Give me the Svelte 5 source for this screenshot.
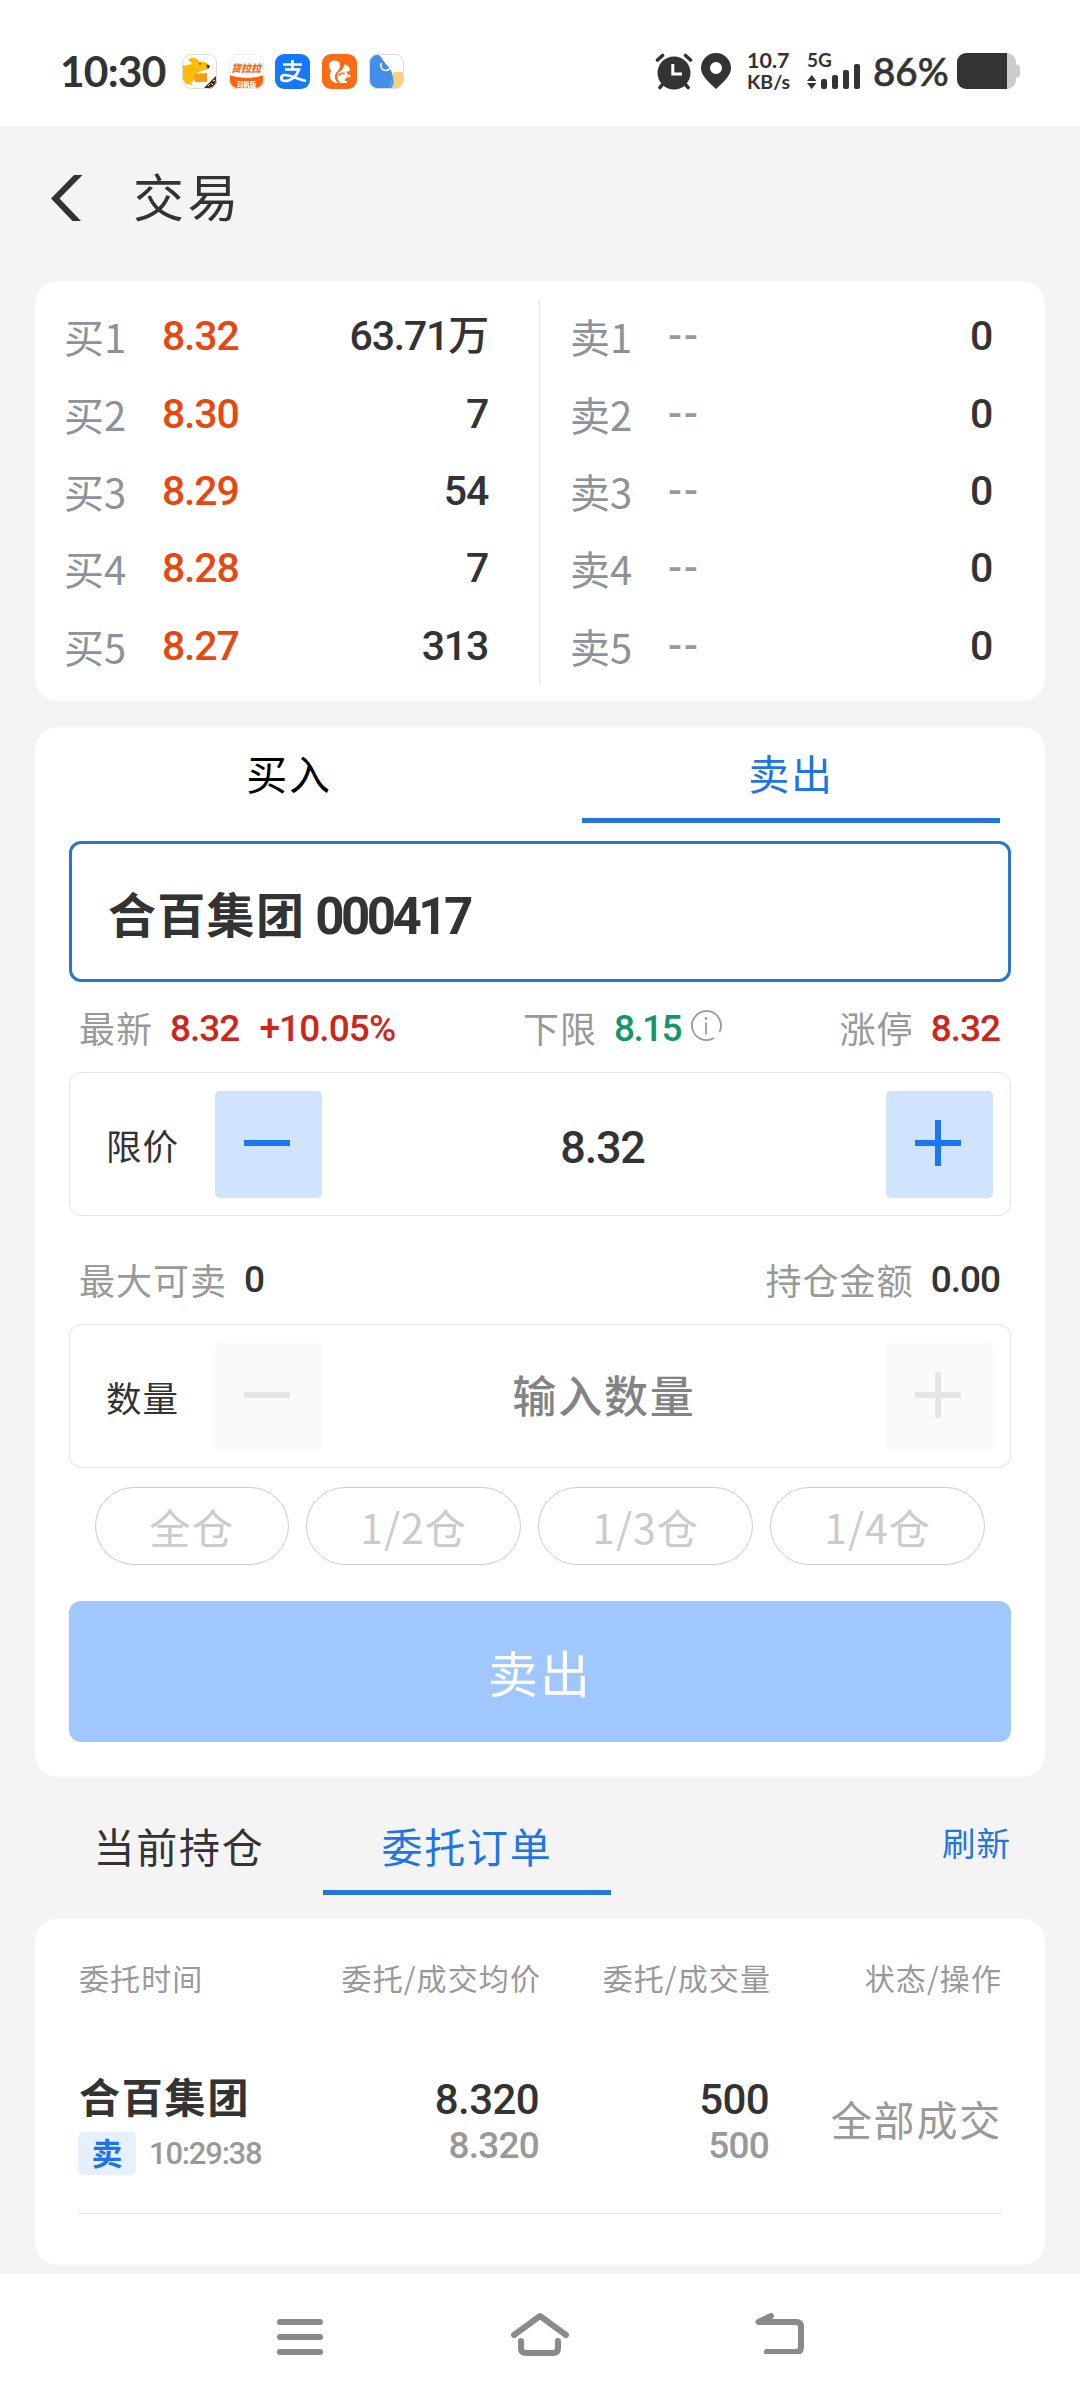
<script lang="ts">
  type Level = { label: string; price: string; volume: string };

  const bids: Level[] = [
    { label: '买1', price: '8.32', volume: '63.71万' },
    { label: '买2', price: '8.30', volume: '7' },
    { label: '买3', price: '8.29', volume: '54' },
    { label: '买4', price: '8.28', volume: '7' },
    { label: '买5', price: '8.27', volume: '313' }
  ];

  const asks: Level[] = [1, 2, 3, 4, 5].map((n) => ({ label: `卖${n}`, price: '--', volume: '0' }));

  const portions = ['全仓', '1/2仓', '1/3仓', '1/4仓'];

  const orders = [
    {
      name: '合百集团',
      side: '卖',
      time: '10:29:38',
      price: '8.320',
      avgPrice: '8.320',
      qty: '500',
      filled: '500',
      status: '全部成交'
    }
  ];

  let side = $state('sell');
  let listTab = $state('orders');
</script>

{#snippet plusMinus(plus: boolean)}
  <svg width="46" height="46" viewBox="0 0 46 46">
    <rect y="20" width="46" height="6" fill="currentColor" />
    {#if plus}<rect x="20" width="6" height="46" fill="currentColor" />{/if}
  </svg>
{/snippet}

<div class="screen">
  <div class="status-bar">
    <span class="clock">10:30</span>
    <div class="app-icons">
      <svg width="35" height="35" viewBox="0 0 35 35">
        <clipPath id="tile"><rect width="35" height="35" rx="9" /></clipPath>
        <g clip-path="url(#tile)">
          <rect width="35" height="35" fill="#fff" />
          <path d="M0 11C4 12 7 11 10 9L6 6C9 3 13 3 16 6L18 8C22 7 26 9 28 12L26 15C23 16 20 17 17 18L14 20L12 26L9 29L11 31L4 30L0 24Z" fill="#fbbd08" />
          <path d="M12 20L25 19V28H13Z" fill="#f79a14" />
          <path d="M24 10.5L28 12L26 15Z" fill="#222" />
          <circle cx="18" cy="9.8" r=".9" fill="#333" />
          <path d="M21 35L35 21V35Z" fill="#47220f" />
          <path d="M26 32L28 30M29 29L31 31M31 27L33 26" stroke="#fff" stroke-width="1" />
        </g>
        <rect x=".5" y=".5" width="34" height="34" rx="8.5" fill="none" stroke="#ddd" />
      </svg>
      <svg width="35" height="35" viewBox="0 0 35 35">
        <g clip-path="url(#tile)">
          <rect width="35" height="35" fill="#fff" />
          <path d="M0 21Q17 27 35 21V35H0Z" fill="#fa6210" />
        </g>
        <rect x=".5" y=".5" width="34" height="34" rx="8.5" fill="none" stroke="#eee" />
        <text class="tile-name" x="17" y="17.5" fill="#fa6210">货拉拉</text>
        <text class="tile-tag" x="17.5" y="33" fill="#fff">司机版</text>
      </svg>
      <svg width="35" height="35" viewBox="0 0 35 35">
        <rect width="35" height="35" rx="9" fill="#1677ff" />
        <path d="M8 10.5H27M17.5 6V15M10 15.5H24C22 22 16 27 10 27C5 27 5 21 10 21C16 21 22 25 31 27" fill="none" stroke="#fff" stroke-width="2.7" />
      </svg>
      <svg width="35" height="35" viewBox="0 0 35 35">
        <rect width="35" height="35" rx="9" fill="#fb6a15" />
        <path d="M17.5 9C15 5 7 6 7 12C7 14 8 16 9.5 17C5 22 10 30 16 29C12 25 12 21 15 18C17 16 19 13 17.5 9Z" fill="#fff" />
        <path d="M23 10L26 12C28 14 29 16 27 17L24 18C27 20 26 24 23 25V27H25V29H18C14 24 15 18 20 16C21 14 22 12 23 10Z" fill="#fff" />
        <path d="M17 22A4 4 0 0 1 23 20" fill="none" stroke="#fb6a15" stroke-width="1.5" />
        <circle cx="27" cy="22" r="1.5" fill="#fff" />
      </svg>
      <svg width="35" height="35" viewBox="0 0 35 35">
        <g clip-path="url(#tile)">
          <rect width="35" height="35" fill="#fff" />
          <circle cx="29" cy="27" r="9.5" fill="#f9d084" />
          <path d="M0 0H8C13 2 14 8 19 12C25 18 24 27 20 35H0Z" fill="#438ee8" />
          <path d="M20 35C23 30 24 24 22 18C25 24 26 30 22 35Z" fill="#31a8dc" />
        </g>
        <path d="M12 9C10 18 22 20 23 9" fill="none" stroke="#fff" stroke-width="1.6" />
        <rect x=".5" y=".5" width="34" height="34" rx="8.5" fill="none" stroke="#ddd" />
      </svg>
    </div>

    <div class="indicators">
      <svg width="38" height="37" viewBox="0 0 38 37">
        <circle cx="19" cy="20" r="16.5" fill="#333" />
        <path d="M2.5 7L7.5 2.5M30.5 2.5L35.5 7M7 32L5 34.5M31 32L33 34.5" stroke="#333" stroke-width="3.6" stroke-linecap="round" />
        <path d="M17.8 11V21H27" fill="none" stroke="#fff" stroke-width="3" />
      </svg>
      <svg class="pin" width="30" height="36" viewBox="0 0 30 36">
        <path fill-rule="evenodd" d="M15 0A15 15 0 0 0 0 15C0 23 8 29 15 36C22 29 30 23 30 15A15 15 0 0 0 15 0ZM15 9A6 6 0 1 1 15 21A6 6 0 1 1 15 9Z" fill="#333" />
      </svg>
      <div class="speed"><span>10.7</span><span>KB/s</span></div>
      <div class="signal">
        <span>5G</span>
        <svg width="54" height="26" viewBox="0 0 54 26">
          <path d="M0 18L4.7 12L9.4 18ZM0 20H9.4L4.7 26Z" fill="#333" />
          <rect x="14" y="16" width="6" height="10" rx="2" fill="#333" />
          <rect x="25" y="12" width="6" height="14" rx="2" fill="#333" />
          <rect x="36" y="7" width="6" height="19" rx="2" fill="#333" />
          <rect x="47" y="1" width="6" height="25" rx="2" fill="#333" />
        </svg>
      </div>
      <span class="percent">86%</span>
      <svg width="63" height="36" viewBox="0 0 63 36">
        <path d="M9 0H50A9 9 0 0 1 59 9V11.5H60Q63 11.5 63 15V21Q63 24.5 60 24.5H59V27A9 9 0 0 1 50 36H9Z" fill="#ccc" />
        <path d="M9 0H50V36H9A9 9 0 0 1 0 27V9A9 9 0 0 1 9 0Z" fill="#333" />
      </svg>
    </div>
  </div>

  <header class="title-bar">
    <svg width="32" height="46" viewBox="0 0 32 46">
      <path d="M23 0H31.5L8.5 23.5L30 46H21.5L0 23.5Z" fill="#333" />
    </svg>
    <h1>交易</h1>
  </header>

  <section class="card book">
    {#each [bids, asks] as levels, i}
      <div class="book-side" class:asks={i === 1}>
        {#each levels as level}
          <div class="level">
            <span class="level-label">{level.label}</span>
            <span class="level-price" class:empty={level.price === '--'}>{level.price}</span>
            <span class="level-volume">{level.volume}</span>
          </div>
        {/each}
      </div>
    {/each}
  </section>

  <section class="card trade">
    <nav class="side-tabs">
      <button class:active={side === 'buy'} onclick={() => (side = 'buy')}>买入</button>
      <button class:active={side === 'sell'} onclick={() => (side = 'sell')}>卖出</button>
    </nav>

    <div class="stock"><span>合百集团</span><span class="code">000417</span></div>

    <div class="info quotes">
      <div class="latest"><span class="key">最新</span><b class="up">8.32</b><b class="up change">+10.05%</b></div>
      <div class="lower">
        <span class="key">下限</span><b class="down">8.15</b>
        <svg width="32" height="32" viewBox="0 0 32 32">
          <path d="M29.5 22A14.5 14.5 0 1 0 24 28" fill="none" stroke="#999" stroke-width="1.8" />
          <path d="M16 12.5V24.5" stroke="#999" stroke-width="1.8" />
          <circle cx="16" cy="8.5" r="1.4" fill="#999" />
        </svg>
      </div>
      <div class="upper"><span class="key">涨停</span><b class="up">8.32</b></div>
    </div>

    <div class="stepper">
      <span class="stepper-label">限价</span>
      <button>{@render plusMinus(false)}</button>
      <span class="value">8.32</span>
      <button>{@render plusMinus(true)}</button>
    </div>

    <div class="info holdings">
      <div><span class="key">最大可卖</span><b>0</b></div>
      <div class="upper"><span class="key">持仓金额</span><b>0.00</b></div>
    </div>

    <div class="stepper">
      <span class="stepper-label">数量</span>
      <button disabled>{@render plusMinus(false)}</button>
      <span class="placeholder">输入数量</span>
      <button disabled>{@render plusMinus(true)}</button>
    </div>

    <div class="portions">
      {#each portions as portion, i}
        <button class:full={i === 0}>{portion}</button>
      {/each}
    </div>

    <button class="submit">卖出</button>
  </section>

  <nav class="list-tabs">
    <button class:active={listTab === 'positions'} onclick={() => (listTab = 'positions')}>当前持仓</button>
    <button class:active={listTab === 'orders'} onclick={() => (listTab = 'orders')}>委托订单</button>
    <button class="refresh">刷新</button>
  </nav>

  <section class="card orders">
    <div class="order-grid order-head">
      <span>委托时间</span>
      <span>委托/成交均价</span>
      <span>委托/成交量</span>
      <span>状态/操作</span>
    </div>
    {#each orders as order}
      <div class="order-grid order">
        <div class="who">
          <strong>{order.name}</strong>
          <div class="meta"><i>{order.side}</i><time>{order.time}</time></div>
        </div>
        <div class="pair"><b>{order.price}</b><span>{order.avgPrice}</span></div>
        <div class="pair"><b>{order.qty}</b><span>{order.filled}</span></div>
        <div class="state">{order.status}</div>
      </div>
    {/each}
  </section>

  <footer class="nav-bar">
    <svg width="46" height="36" viewBox="0 0 46 36">
      <path d="M3 3H43M3 18H43M3 33H43" />
    </svg>
    <svg width="60" height="46" viewBox="0 0 60 46">
      <path d="M4 25L30 6L56 25M11 31V38Q11 43 16 43H43Q48 43 48 38V31" />
    </svg>
    <svg width="50" height="42" viewBox="0 0 50 42">
      <path d="M16 4L3.5 10H41Q46 10 46 15V35Q46 40 41 40H12" />
    </svg>
  </footer>
</div>

<style>
  :global(body) {
    background: #f4f4f4;
  }

  .screen {
    width: 1080px;
    height: 2400px;
    display: flex;
    flex-direction: column;
    background: #f4f4f4;
    color: #333;
    font-family: 'Noto Sans CJK SC', sans-serif;
    overflow: hidden;
    white-space: nowrap;
  }

  svg {
    display: block;
    flex: none;
  }

  button {
    margin: 0;
    padding: 0;
    border: 0;
    background: none;
    color: inherit;
    font: inherit;
  }

  /* system status bar */
  .status-bar {
    box-sizing: border-box;
    flex: none;
    height: 126px;
    padding: 16px 60px 0 60px;
    display: flex;
    align-items: center;
    background: #fff;
  }

  .clock {
    width: 122px;
    font: 700 42.5px/50px Lato, sans-serif;
    letter-spacing: -0.8px;
  }

  .app-icons {
    display: flex;
    gap: 11.7px;
  }

  .tile-name {
    font-size: 10px;
    font-weight: 900;
    font-style: italic;
    text-anchor: middle;
  }

  .tile-tag {
    font-size: 6.5px;
    font-weight: 900;
    text-anchor: middle;
  }

  .indicators {
    margin-left: auto;
    display: flex;
    align-items: center;
  }

  .pin {
    margin-left: 8px;
  }

  .speed {
    width: 44px;
    margin-left: 16px;
    display: flex;
    flex-direction: column;
    font: 700 21.5px/22px Lato, sans-serif;
  }

  .speed span + span {
    font-size: 19.5px;
  }

  .signal {
    margin-left: 16px;
    font: 700 19px/14px Lato, sans-serif;
  }

  .signal svg {
    margin-top: -4px;
  }

  .percent {
    width: 84px;
    margin-left: 12px;
    font: 500 38.5px/44px Lato, sans-serif;
    -webkit-text-stroke: 0.6px #333;
  }

  .title-bar {
    flex: none;
    height: 155px;
    padding-left: 51px;
    padding-bottom: 11px;
    box-sizing: border-box;
    display: flex;
    align-items: center;
    gap: 50px;
  }

  h1 {
    margin: 0;
    padding-bottom: 6px;
    font-size: 51px;
    font-weight: 400;
    line-height: 60px;
    letter-spacing: 3.5px;
  }

  .card {
    box-sizing: border-box;
    flex: none;
    margin: 0 35px;
    border-radius: 23px;
    background: #fff;
  }

  /* order book */
  .book {
    height: 420px;
    padding: 17px 0 16px;
    display: grid;
    grid-template-columns: 505px 505px;
  }

  .book-side {
    box-sizing: border-box;
    padding: 0 51px 0 29px;
    display: grid;
    grid-template-rows: repeat(5, 1fr);
    border-right: 1px solid #e8e8e8;
  }

  .book-side.asks {
    padding: 0 53px 0 30px;
    border-right: 0;
  }

  .level {
    display: flex;
    align-items: center;
  }

  .level-label {
    width: 98px;
    padding-bottom: 1px;
    color: #8b9399;
    font-size: 40px;
    line-height: 50px;
  }

  .level-price,
  .level-volume {
    padding-bottom: 1px;
    font: 500 41px/50px Roboto, 'Noto Sans CJK SC', sans-serif;
    letter-spacing: -1.2px;
  }

  .level-price {
    color: #e8470f;
  }

  .level-price.empty {
    color: #999;
    letter-spacing: 2px;
  }

  .level-volume {
    margin-left: auto;
  }

  /* trade form */
  .trade {
    height: 1050px;
    margin-top: 26px;
    padding: 0 34px;
    display: flex;
    flex-direction: column;
  }

  .side-tabs {
    height: 96px;
    margin: 0 -34px;
    display: grid;
    grid-template-columns: 1fr 1fr;
  }

  .side-tabs button {
    box-sizing: border-box;
    margin: 0 45px 0 42px;
    padding-bottom: 1px;
    border-bottom: 5px solid transparent;
    color: #000;
    font-size: 41px;
    line-height: 50px;
    letter-spacing: 1.8px;
  }

  .side-tabs button:first-child {
    margin: 0 42px 0 45px;
  }

  .side-tabs .active {
    border-color: #2576dc;
    color: #1f74e6;
  }

  .stock {
    box-sizing: border-box;
    height: 141px;
    margin-top: 18px;
    padding-left: 36px;
    display: flex;
    align-items: center;
    border: 3px solid #2b74d4;
    border-radius: 12px;
    font-size: 48px;
    font-weight: 700;
    line-height: 60px;
    letter-spacing: 1.3px;
  }

  .code {
    margin-left: 10px;
    padding-top: 11px;
    font-family: Roboto, sans-serif;
    font-size: 51px;
    letter-spacing: -3.5px;
  }

  .info {
    display: flex;
    justify-content: space-between;
    padding: 0 11px 0 10px;
  }

  .info div {
    display: flex;
    align-items: center;
  }

  .quotes {
    height: 90px;
  }

  .info .latest {
    flex: none;
    width: 444px;
  }

  .info .upper {
    margin-left: auto;
  }

  .holdings {
    height: 108px;
    padding-top: 17px;
    box-sizing: border-box;
  }

  .key {
    margin-right: 17px;
    color: #999;
    font-size: 36px;
    line-height: 44px;
    letter-spacing: 1px;
  }

  .info b {
    padding-top: 3px;
    font: 500 37px/44px Roboto, sans-serif;
    letter-spacing: -1px;
  }

  .info .up {
    color: #cc261d;
  }

  .info .down {
    color: #14976a;
    letter-spacing: -1.6px;
  }

  .info .change {
    margin-left: 20px;
    letter-spacing: -0.9px;
  }

  .lower svg {
    margin-left: 9px;
    margin-bottom: 3px;
  }

  .stepper {
    box-sizing: border-box;
    height: 144px;
    padding: 0 17px 0 36px;
    display: flex;
    align-items: center;
    border: 1px solid #e4e4e4;
    border-radius: 12px;
  }

  .stepper-label {
    width: 109px;
    font-size: 35.5px;
    letter-spacing: 1px;
  }

  .stepper button {
    width: 107px;
    height: 107px;
    padding-right: 3px;
    padding-bottom: 3px;
    box-sizing: border-box;
    display: flex;
    align-items: center;
    justify-content: center;
    border-radius: 5px;
    background: #d0e3ff;
    color: #1a76f5;
  }

  .stepper button:disabled {
    background: #fafafa;
    color: #e5e5e5;
  }

  .value,
  .placeholder {
    flex: 1;
    text-align: center;
  }

  .value {
    padding-top: 7px;
    padding-right: 3px;
    font: 500 45px/54px Roboto, sans-serif;
    letter-spacing: -1.2px;
  }

  .placeholder {
    padding-bottom: 4px;
    color: #838383;
    font-size: 44px;
    font-weight: 500;
    line-height: 54px;
    letter-spacing: 1.8px;
  }

  .portions {
    margin: 19px 26px 0;
    display: flex;
    gap: 17px;
  }

  .portions button {
    box-sizing: border-box;
    width: 215px;
    height: 78px;
    border: 1px solid #ccc;
    border-radius: 39px;
    color: #cbcbcb;
    font-size: 41px;
    line-height: 50px;
    letter-spacing: 1px;
  }

  .portions .full {
    width: 194px;
    letter-spacing: 1.8px;
  }

  .submit {
    height: 141px;
    margin-top: 36px;
    padding-bottom: 2px;
    border-radius: 12px;
    background: #a1c7ff;
    color: #fff;
    font-size: 50px;
    letter-spacing: 2px;
  }

  /* positions / orders */
  .list-tabs {
    box-sizing: border-box;
    flex: none;
    height: 118px;
    margin-bottom: 23px;
    padding: 0 69px 0 35px;
    display: flex;
  }

  .list-tabs button {
    box-sizing: border-box;
    width: 288px;
    padding-top: 22px;
    border-bottom: 5px solid transparent;
    font-size: 41px;
    line-height: 50px;
    letter-spacing: 1.8px;
  }

  .list-tabs .active {
    border-color: #2576dc;
    color: #1f74e6;
  }

  .list-tabs .refresh {
    width: auto;
    margin-left: auto;
    padding-top: 17px;
    color: #2276dd;
    font-size: 33.5px;
    letter-spacing: 1px;
  }

  .orders {
    height: 347px;
    padding: 37px 43px 0;
  }

  .order-grid {
    display: grid;
    grid-template-columns: 184px 279px 230px 231px;
  }

  .order-head {
    height: 90px;
    color: #999;
    font-size: 30px;
    line-height: 44px;
    letter-spacing: 1.1px;
    text-align: right;
  }

  .order-head span:first-child {
    text-align: left;
    padding-left: 1px;
  }

  .order {
    height: 169px;
    padding-top: 25px;
    box-sizing: border-box;
    border-bottom: 1px solid #e2e2e2;
  }

  .who strong {
    display: block;
    padding-left: 1px;
    font-size: 41px;
    font-weight: 600;
    line-height: 50px;
    letter-spacing: 1.8px;
  }

  .meta {
    margin-top: 12px;
    display: flex;
    align-items: center;
    gap: 13px;
  }

  .meta i {
    flex: none;
    width: 58px;
    height: 43px;
    border-radius: 5px;
    background: #e6f0ff;
    color: #1c74e8;
    font-size: 31px;
    font-style: normal;
    font-weight: 600;
    line-height: 40px;
    text-align: center;
  }

  .meta time {
    color: #999;
    font: 500 31px/43px Roboto, sans-serif;
    letter-spacing: -1.2px;
  }

  .pair {
    padding-top: 5px;
    display: flex;
    flex-direction: column;
    align-items: flex-end;
    padding-right: 2px;
    font: 500 42px/50px Roboto, sans-serif;
    letter-spacing: -0.6px;
  }

  .pair b {
    font-weight: 500;
  }

  .pair span {
    color: #999;
    font-size: 37px;
    line-height: 42px;
    letter-spacing: -0.8px;
  }

  .state {
    padding: 23px 0 0;
    color: #999;
    font-size: 41px;
    line-height: 50px;
    letter-spacing: 1.8px;
    text-align: right;
  }

  /* system navigation */
  .nav-bar {
    flex: none;
    height: 126px;
    margin-top: 9px;
    padding: 0 0 1px 277px;
    box-sizing: border-box;
    display: flex;
    align-items: center;
    background: #fff;
  }

  .nav-bar svg {
    fill: none;
    stroke: #8a8a8a;
    stroke-width: 6;
    stroke-linecap: round;
    stroke-linejoin: round;
  }

  .nav-bar svg:nth-child(2) {
    margin: 0 185px 8px 187px;
  }

  .nav-bar svg:nth-child(3) {
    margin-bottom: 8px;
  }
</style>
